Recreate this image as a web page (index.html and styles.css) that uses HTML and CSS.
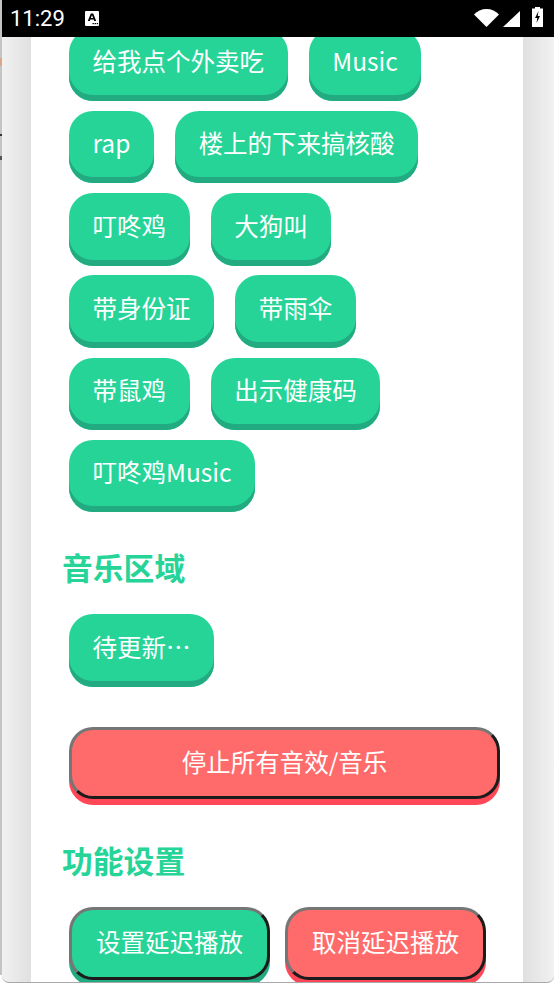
FILE: index.html
```html
<!DOCTYPE html>
<html lang="zh">
<head>
<meta charset="utf-8">
<title>音效板</title>
<link rel="stylesheet" href="styles.css">
</head>
<body>
<div class="screen">
  <header class="status">
    <span class="time">11:29</span>
    <svg class="a-icon" width="14" height="15" viewBox="0 0 14 15"><rect width="14" height="15" rx="1" fill="#fff"/><path d="M2.800 10 5.800 2.500h2.400l3 7.500H9.200l-.5-1.500H5.300L4.800 10zM5.900 6.900h2.200L7 4z" fill="#000"/><rect x="7.500" y="12" width="1.400" height="1.200" fill="#000"/><rect x="9.600" y="12" width="1.400" height="1.200" fill="#000"/><rect x="11.700" y="12" width="1.400" height="1.200" fill="#000"/></svg>
    <span class="status-right">
      <svg class="wifi" width="25" height="18" viewBox="0 0 25 18"><path d="M0 5.500C3.200 2 7.600 0 12.500 0S21.800 2 25 5.500L12.500 18z" fill="#fff"/></svg>
      <svg class="signal" width="17" height="16" viewBox="0 0 17 16"><path d="M17 0V16H0z" fill="#fff"/></svg>
      <svg class="battery" width="11" height="20" viewBox="0 0 11 20"><path d="M3 0h5v1.500h3V20H0V1.500h3z" fill="#fff"/><path d="M6.500 4 3 11h2.300L4.500 16 8 9H5.700z" fill="#000"/></svg>
    </span>
  </header>
  <div class="view">
    <main class="card">
      <section class="keys">
        <button class="key">给我点个外卖吃</button>
        <button class="key">Music</button>
        <button class="key">rap</button>
        <button class="key">楼上的下来搞核酸</button>
        <button class="key">叮咚鸡</button>
        <button class="key">大狗叫</button>
        <button class="key">带身份证</button>
        <button class="key">带雨伞</button>
        <button class="key">带鼠鸡</button>
        <button class="key">出示健康码</button>
        <button class="key">叮咚鸡Music</button>
      </section>
      <h2 class="title">音乐区域</h2>
      <section class="keys">
        <button class="key">待更新…</button>
      </section>
      <button class="action red wide">停止所有音效/音乐</button>
      <h2 class="title settings">功能设置</h2>
      <section class="pair">
        <button class="action green">设置延迟播放</button>
        <button class="action red">取消延迟播放</button>
      </section>
    </main>
  </div>
</div>
</body>
</html>
```
FILE: styles.css
```css
* { box-sizing: border-box; }
html, body { margin: 0; padding: 0; }
body { font-family: "Noto Sans CJK SC", "Noto Sans", sans-serif; background: #fff; }
.screen { width: 554px; height: 984px; display: flex; flex-direction: column; overflow: hidden; padding: 0 0 1px 2px;
  background: linear-gradient(180deg, #c4c4c4 0, #c4c4c4 58px, #d9a886 58px, #d9a886 66px, #c4c4c4 66px, #c4c4c4 134px, #333 134px, #333 136px, #c4c4c4 136px, #c4c4c4 156px, #555 156px, #555 160px, #c4c4c4 160px, #c4c4c4 975px, #fff 975px); }
.status { height: 37px; flex: none; background: #000; color: #fff; display: flex; align-items: center; padding: 0 11px 0 8px; }
.time { font-family: Roboto, sans-serif; font-size: 22px; line-height: 37px; width: 75px; }
.a-icon { flex: none; }
.status-right { margin-left: auto; display: flex; align-items: flex-start; align-self: flex-start; gap: 4px; }
.wifi { margin-top: 9px; }
.signal { margin-top: 11px; }
.battery { margin-top: 7px; margin-left: 8px; }
.view { flex: 1; min-height: 0; overflow: hidden; padding: 0 31px 0 29px; border-bottom: 1px solid #a8a8a8; border-bottom-left-radius: 7px; border-bottom-right-radius: 7px; background: linear-gradient(90deg, #f0f1f0 0, #dfe0df 29px, #dfe0df 521px, #f0f1f0 552px); }
.card { background: #fff; height: calc(100% + 9px); padding: 0 0 0 31px; margin-top: -8.500px; }
.keys { display: flex; flex-wrap: wrap; column-gap: 21.300px; row-gap: 9.800px; padding: 0 30px 0 7px; }
.key { height: 72.500px; border: 0; border-radius: 24px; padding: 0 23.500px 7px; font: 400 24.500px/1 "Noto Sans CJK SC", sans-serif; color: #fff; background: #26d498; box-shadow: inset 0 -6px 0 #22ab80; }
.title { margin: 35px 0 0; font-size: 30.800px; line-height: 40px; font-weight: 700; color: #26d498; }
.title + .keys { margin-top: 27px; }
.action { border: 3px solid; border-color: #767676 #1c1c1c #1c1c1c #767676; border-radius: 24px; font: 400 24.500px/1 "Noto Sans CJK SC", sans-serif; color: #fff; padding: 0 0 2px; }
.red { background: #ff6b6b; box-shadow: 0 6px 0 0 #ff4757; }
.green { background: #26d498; box-shadow: 0 6px 0 0 #22ab80; }
.wide { display: block; width: 431px; height: 72.300px; margin: 40px 0 0 7px; }
.settings { margin-top: 41px; }
.pair { display: flex; gap: 15px; padding-left: 7px; margin-top: 27px; }
.pair .action { width: 201px; height: 72.300px; flex: none; }
```
